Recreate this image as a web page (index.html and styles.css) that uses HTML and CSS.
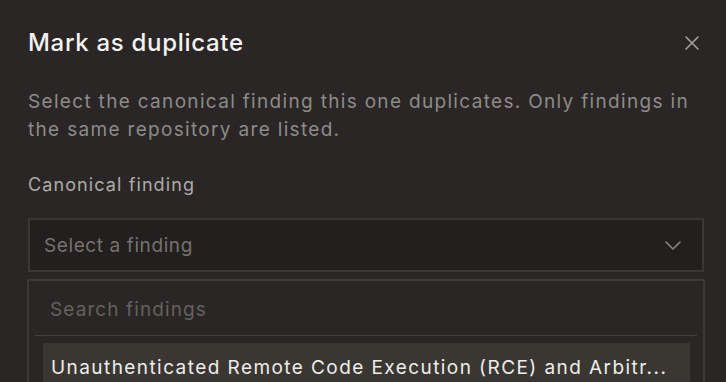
FILE: index.html
```html
<!DOCTYPE html>
<html lang="en">
<head>
<meta charset="utf-8">
<title>Mark as duplicate</title>
<link rel="stylesheet" href="styles.css">
</head>
<body>
<div class="modal">
  <div class="modal-header">
    <h2 class="modal-title">Mark as duplicate</h2>
    <button class="close-btn" aria-label="Close">
      <svg width="14" height="14" viewBox="0 0 14 14"><path d="M1 1L13 13M13 1L1 13" stroke="currentColor" stroke-width="1.6" fill="none" stroke-linecap="round"/></svg>
    </button>
  </div>
  <p class="modal-desc">Select the canonical finding this one duplicates. Only findings in the same repository are listed.</p>
  <label class="field-label">Canonical finding</label>
  <div class="select">
    <span class="select-placeholder">Select a finding</span>
    <svg class="chevron" width="16" height="9" viewBox="0 0 16 9"><path d="M1 1L8 8L15 1" stroke="currentColor" stroke-width="1.6" fill="none" stroke-linecap="round" stroke-linejoin="round"/></svg>
  </div>
  <div class="dropdown">
    <div class="search">Search findings</div>
    <div class="divider"></div>
    <div class="list">
      <div class="item active">Unauthenticated Remote Code Execution (RCE) and Arbitr...</div>
    </div>
  </div>
</div>
</body>
</html>
```
FILE: styles.css
```css
* { box-sizing: border-box; }
html, body {
  margin: 0;
  padding: 0;
  background: #292625;
  height: 100%;
  overflow: hidden;
}
body {
  font-family: Inter, "Open Sans", sans-serif;
  color: #8c8987;
}
.modal {
  padding: 28px 22px 0 28px;
}
.modal-header {
  display: flex;
  align-items: center;
  justify-content: space-between;
  height: 30px;
}
.modal-title {
  margin: 0;
  font-size: 24px;
  font-weight: 500;
  color: #f4f3f2;
  line-height: 30px;
  letter-spacing: 0.7px;
}
.close-btn {
  width: 24px;
  height: 24px;
  padding: 0;
  border: 0;
  background: none;
  color: #a3a09e;
  display: flex;
  align-items: center;
  justify-content: center;
}
.modal-desc {
  margin: 30px 0 0;
  font-size: 19px;
  line-height: 28px;
  color: #8e8b89;
  letter-spacing: 1.32px;
}
.field-label {
  display: block;
  margin-top: 29px;
  font-size: 18px;
  font-weight: 400;
  line-height: 24px;
  color: #aeaba9;
  letter-spacing: 1.1px;
}
.select {
  margin-top: 21px;
  height: 54px;
  border: 2px solid #3a3734;
  background: #221f1e;
  display: flex;
  align-items: center;
  justify-content: space-between;
  padding: 0 21px 0 14px;
}
.select-placeholder {
  font-size: 19px;
  color: #76726f;
  letter-spacing: 0.6px;
}
.chevron { color: #8a8785; }
.dropdown {
  margin: 7px -1px 0 -1px;
  border: 2px solid #3b3835;
  border-bottom: 0;
  background: #292625;
  padding: 0 6px;
}
.search {
  height: 54px;
  display: flex;
  align-items: center;
  padding-left: 15px;
  padding-top: 3px;
  font-size: 19px;
  color: #65615e;
  letter-spacing: 1.1px;
}
.divider {
  height: 1px;
  background: #46423f;
}
.list {
  padding: 7px 7px 0 8px;
}
.item {
  padding: 12px 8px 8px;
  font-size: 19px;
  line-height: 26px;
  color: #eeedec;
  white-space: nowrap;
  letter-spacing: 1.43px;
}
.item.active { background: #3a3733; }
```
